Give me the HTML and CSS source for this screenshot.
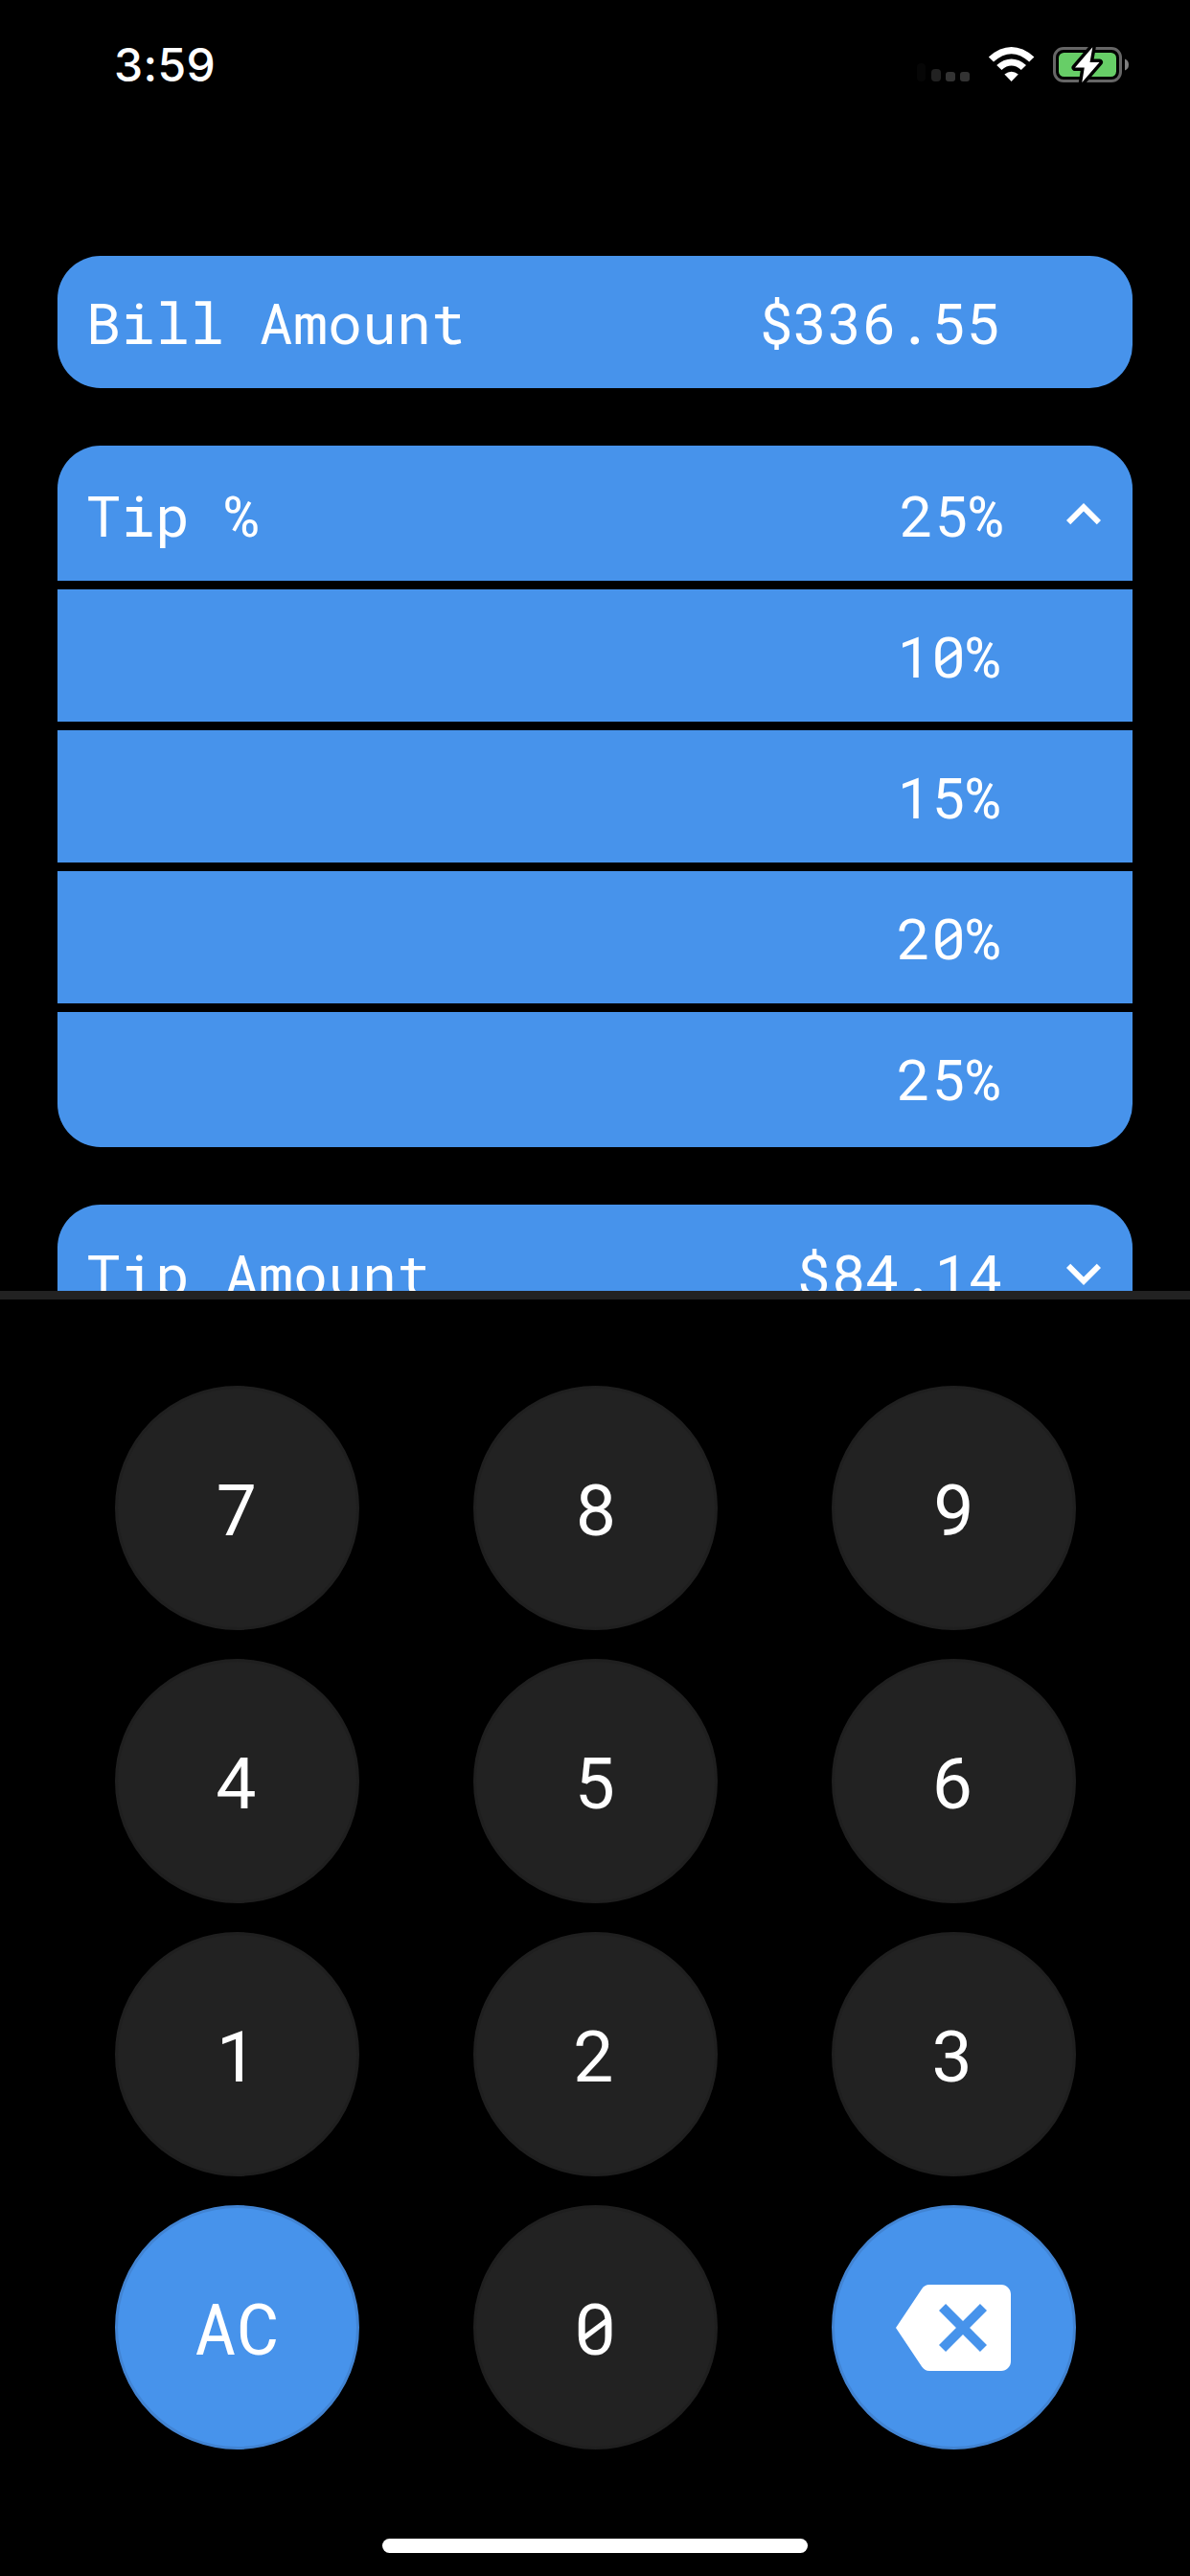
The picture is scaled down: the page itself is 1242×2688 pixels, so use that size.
FILE: index.html
```html
<!DOCTYPE html>
<html lang="en">
<head>
<meta charset="utf-8">
<title>Tip Calculator</title>
<link rel="stylesheet" href="styles.css">
</head>
<body>
<div class="app">
  <header class="status">
    <span class="time">3:59</span>
    <svg class="status-icons" viewBox="0 0 230 48" aria-hidden="true">
      <rect x="9" y="22" width="9" height="19" rx="4" fill="#060606"/>
      <rect x="24" y="28" width="10" height="13" rx="4" fill="#222"/>
      <rect x="39" y="31" width="10" height="10" rx="3" fill="#333"/>
      <rect x="54" y="31" width="10" height="10" rx="3" fill="#333"/>
      <g fill="#fff">
        <path d="M83.8 15.4Q107.6-5.2 131.4 15.4L126.2 20.5Q107.6 3.8 89 20.5Z"/>
        <path d="M92.2 24Q107.6 11.2 123 24L117.8 29Q107.6 20.2 97.4 29Z"/>
        <path d="M100.4 33.4Q107.6 28 114.8 33.4L107.6 41Z"/>
      </g>
      <rect x="152.5" y="6.5" width="69" height="34" rx="9.5" fill="none" stroke="#666" stroke-width="3"/>
      <rect x="157" y="11" width="60" height="25" rx="5.5" fill="#67ce67"/>
      <path d="M226 17.5Q230 19 230 23.5T226 29.5Z" fill="#808080"/>
      <path d="M192.300 5.200L174 26.500h9.800L181.300 42 199.500 21h-10z" fill="#fff" stroke="#000" stroke-width="7" stroke-linejoin="round" paint-order="stroke"/>
    </svg>
  </header>

  <main class="fields">
    <section class="card">
      <div class="row"><span>Bill Amount</span><span class="value">$336.55</span></div>
    </section>
    <section class="card expandable">
      <div class="row"><span>Tip %</span><span class="value">25%</span>
        <svg class="chevron" viewBox="0 0 24 24"><path d="M12 8l-6 6 1.410 1.410L12 10.830l4.590 4.580L18 14z"/></svg></div>
      <div class="row"><span class="value">10%</span></div>
      <div class="row"><span class="value">15%</span></div>
      <div class="row"><span class="value">20%</span></div>
      <div class="row"><span class="value">25%</span></div>
    </section>
    <section class="card expandable">
      <div class="row"><span>Tip Amount</span><span class="value">$84.14</span>
        <svg class="chevron" viewBox="0 0 24 24"><path d="M16.590 8.590L12 13.170 7.410 8.590 6 10l6 6 6-6z"/></svg></div>
    </section>
  </main>

  <div class="keypad">
    <button class="key">7</button><button class="key">8</button><button class="key">9</button>
    <button class="key">4</button><button class="key">5</button><button class="key">6</button>
    <button class="key">1</button><button class="key">2</button><button class="key">3</button>
    <button class="key accent">AC</button><button class="key">0</button>
    <button class="key accent erase" aria-label="Backspace"><svg class="backspace" viewBox="0 0 24 24"><path d="M22 3H7c-.69 0-1.230.35-1.590.88L0 12l5.410 8.110c.36.53.9.89 1.590.89h15c1.100 0 2-.9 2-2V5c0-1.100-.9-2-2-2zm-3 12.590L17.590 17 14 13.410 10.410 17 9 15.590 12.590 12 9 8.410 10.410 7 14 10.590 17.590 7 19 8.410 15.410 12 19 15.590z"/></svg></button>
  </div>
  <div class="home-bar"></div>
</div>
</body>
</html>
```
FILE: styles.css
```css
* { box-sizing: border-box; }
body { margin: 0; background: #000; color: #fff; }
.app {
  width: 1242px;
  height: 2688px;
  overflow: hidden;
  display: flex;
  flex-direction: column;
  font-family: "Roboto Mono", "Liberation Mono", monospace;
}
.status {
  flex: none;
  height: 267px;
  padding: 44px 64px 0 119px;
  display: flex;
  justify-content: space-between;
  align-items: flex-start;
}
.time { font: 500 48px/48px Inter, sans-serif; letter-spacing: 0.4px; }
.status-icons { width: 230px; height: 48px; }
.fields {
  flex: none;
  height: 1080px;
  padding: 0 60px;
  overflow: hidden;
  display: flex;
  flex-direction: column;
  gap: 60px;
}
.card {
  flex: none;
  display: flex;
  flex-direction: column;
  gap: 9px;
  border-radius: 45px;
  overflow: hidden;
}
.row {
  height: 138px;
  padding: 0 138px 0 30px;
  display: flex;
  align-items: center;
  background: #4793eb;
  font-size: 60px;
  line-height: 78px;
  white-space: pre;
}
.expandable .row:first-child { height: 141px; padding: 3px 15px 0 30px; }
.expandable .row:last-child:not(:first-child) { height: 141px; padding-bottom: 3px; }
.value { margin-left: auto; }
.chevron { width: 72px; height: 72px; margin-left: 48px; fill: #fff; }
.keypad {
  flex: none;
  height: 1302px;
  padding: 90px 60px 0;
  border-top: 9px solid #222;
  display: grid;
  grid-template-columns: repeat(3, 374px);
  grid-auto-rows: 255px;
  row-gap: 30px;
  justify-items: center;
}
.key {
  width: 255px;
  height: 255px;
  padding: 0 0 2px;
  border: 3px solid #1f1f1f;
  border-radius: 50%;
  background: #222;
  color: #fff;
  font: 75px/99px "Roboto Mono", "Liberation Mono", monospace;
  display: flex;
  align-items: center;
  justify-content: center;
}
.accent { background: #4793eb; border-color: #4284d3; }
.erase { padding: 0; }
.backspace { width: 120px; height: 120px; fill: #fff; }
.home-bar {
  flex: none;
  width: 444px;
  height: 15px;
  margin: 0 auto;
  border-radius: 8px;
  background: #fff;
}
```
